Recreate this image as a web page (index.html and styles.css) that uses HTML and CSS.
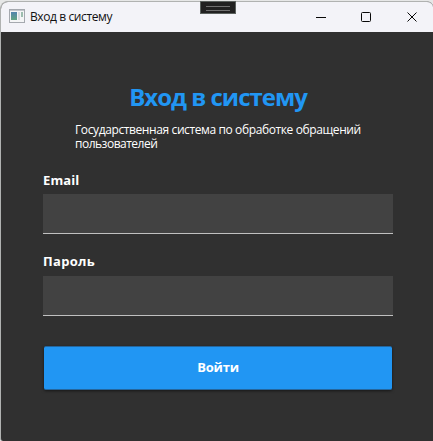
FILE: index.html
```html
<!DOCTYPE html>
<html lang="ru">
<head>
<meta charset="utf-8">
<title>Вход в систему</title>
<link rel="stylesheet" href="styles.css">
</head>
<body>
<div class="window">
  <header class="titlebar">
    <svg class="app-icon" width="16" height="14" viewBox="0 0 16 14">
      <defs><linearGradient id="g" x1="0" y1="0" x2="0" y2="1"><stop offset="0" stop-color="#5284ad"/><stop offset="1" stop-color="#62a582"/></linearGradient></defs>
      <rect x=".5" y=".5" width="15" height="13" fill="#f4f5f6" stroke="#a5a9af"/>
      <path d="M1 1.5h14" stroke="#c3c7cc"/>
      <rect x="2" y="3" width="6" height="8" fill="url(#g)"/>
      <rect x="9" y="3" width="2" height="8" fill="#d9dde0"/>
      <rect x="12" y="3" width="2" height="5" fill="#9dbdaf"/>
    </svg>
    <span class="caption">Вход в систему</span>
    <svg class="controls" width="104" height="12" viewBox="0 0 104 12" fill="none" stroke="#080808">
      <path d="M0 6.5h10"/>
      <rect x="45.5" y="1.5" width="9" height="9" rx="1"/>
      <path d="M91.5 1.5l9 9m0-9l-9 9"/>
    </svg>
  </header>
  <main class="form">
    <h1>Вход в систему</h1>
    <p class="subtitle"><span class="line1">Государственная система по обработке обращений</span> <span class="line2">пользователей</span></p>
    <label class="email" for="email">Email</label>
    <input id="email" type="text">
    <label class="password" for="password">Пароль</label>
    <input id="password" type="password">
    <button type="button"><span>Войти</span></button>
  </main>
</div>
<div class="grip"></div>
</body>
</html>
```
FILE: styles.css
```css
* { box-sizing: border-box; }
body {
  margin: 0;
  height: 441px;
  padding-top: 1px;
  overflow: hidden;
  background: #e6e7e7;
  font-family: "Open Sans", "Noto Sans", sans-serif;
}
.window {
  height: 440px;
  border: 1px solid #b0b2b1;
  border-right: 0;
  border-bottom: 0;
  border-radius: 8px 6px 0 3px;
  overflow: hidden;
  background: #303030;
}
.titlebar {
  display: flex;
  align-items: center;
  height: 30px;
  padding: 0 13px 0 8px;
  background: #f3f3f8;
}
.app-icon { margin-bottom: 2px; }
.caption {
  margin-left: 5px;
  font-size: 12px;
  line-height: 16px;
  color: #111;
  white-space: nowrap;
  letter-spacing: -0.4px;
}
.controls { margin-left: auto; }
.form {
  display: flex;
  flex-direction: column;
  padding: 49px 40px 0 42px;
  color: #fff;
}
h1 {
  margin: 0;
  align-self: center;
  font-size: 24px;
  line-height: 32px;
  font-weight: 700;
  letter-spacing: -1px;
  color: #2196f3;
  white-space: nowrap;
}
.subtitle {
  margin: 10px 0 0 32px;
  font-size: 12px;
  line-height: 14px;
  letter-spacing: -0.39px;
  white-space: nowrap;
}
.subtitle span { display: block; width: max-content; }
.subtitle .line2 { letter-spacing: -0.5px; }
label {
  width: max-content;
  font-size: 13px;
  line-height: 18px;
  font-weight: 700;
}
.email { margin-top: 20px; letter-spacing: 0.1px; }
.password { margin-top: 18px; letter-spacing: 0.3px; }
input {
  height: 40px;
  margin: 5px 0 0;
  padding: 0 8px;
  border: 0;
  border-bottom: 1px solid #c0c0c0;
  border-radius: 0;
  background: #424242;
  color: #fff;
}
#password { margin-top: 6px; }
button {
  height: 44px;
  margin: 30px 1px 0;
  padding: 0 0 2px;
  border: 1px solid #25669d;
  border-width: 1px 0;
  border-radius: 2px;
  background: #2196f3;
  box-shadow: 0 1px 3px rgba(0, 0, 0, 0.55);
  color: #fff;
  font: 700 13px/18px "Open Sans", "Noto Sans", sans-serif;
  letter-spacing: -0.2px;
}
.grip {
  position: absolute;
  left: 200px;
  top: 1px;
  width: 36px;
  height: 13px;
  border: 1px solid #5b615e;
  background: #212121;
}
.grip::before {
  content: "";
  display: block;
  height: 3px;
  margin: 4px 5px;
  border: solid #707070;
  border-width: 1px 0;
}
```
